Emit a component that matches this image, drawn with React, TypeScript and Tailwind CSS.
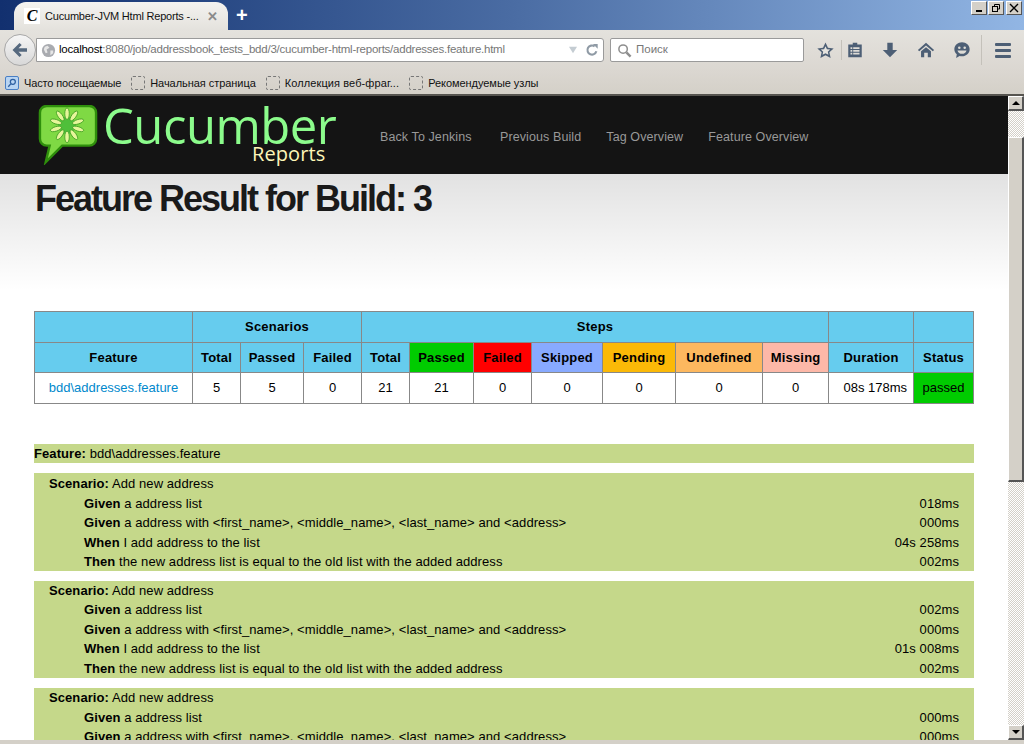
import { Fragment } from 'react';

const font = "font-['Liberation_Sans',Arial,sans-serif]";

const scenarios = [
  { steps: ['018ms', '000ms', '04s 258ms', '002ms'] },
  { steps: ['002ms', '000ms', '01s 008ms', '002ms'] },
  { steps: ['000ms', '000ms', '00s 000ms', '000ms'] },
];

const stepTexts: [string, string][] = [
  ['Given', 'a address list'],
  ['Given', 'a address with <first_name>, <middle_name>, <last_name> and <address>'],
  ['When', 'I add address to the list'],
  ['Then', 'the new address list is equal to the old list with the added address'],
];

const headers: [string, string][] = [
  ['Feature', 'bg-[#66ccee]'],
  ['Total', 'bg-[#66ccee]'],
  ['Passed', 'bg-[#66ccee]'],
  ['Failed', 'bg-[#66ccee]'],
  ['Total', 'bg-[#66ccee]'],
  ['Passed', 'bg-[#00cc00]'],
  ['Failed', 'bg-[#ff0000]'],
  ['Skipped', 'bg-[#88aaff]'],
  ['Pending', 'bg-[#fbb907]'],
  ['Undefined', 'bg-[#fdb85f]'],
  ['Missing', 'bg-[#fdb8a8]'],
  ['Duration', 'bg-[#66ccee]'],
  ['Status', 'bg-[#66ccee]'],
];

const colWidths = ['w-[158px]', 'w-[48px]', 'w-[63px]', 'w-[58px]', 'w-[48px]', 'w-[64px]', 'w-[58px]', 'w-[71px]', 'w-[73px]', 'w-[87px]', 'w-[66px]', 'w-[85px]', 'w-[60px]'];
const values = ['5', '5', '0', '21', '21', '0', '0', '0', '0', '0'];

function ToolIcon({ children, className }: { children: React.ReactNode; className: string }) {
  return (
    <svg viewBox="0 0 20 20" className={className} fill="#4d5f75">
      {children}
    </svg>
  );
}

function Titlebar() {
  return (
    <div className="flex h-[30px] shrink-0 items-end bg-gradient-to-r from-[#12306f] via-[#4a6ca3] to-[#92b6e4] pl-[14px]">
      {/* Tab */}
      <div className="flex h-[28px] w-[214px] items-center rounded-t-[12px] bg-gradient-to-b from-[#f4f3f0] to-[#e4e2dd] pl-[10px]">
        <span className="flex h-[16px] w-[16px] shrink-0 items-center justify-center bg-white font-['Liberation_Serif',serif] text-[16px] font-bold italic leading-none text-black">
          C
        </span>
        <span className="ml-[5px] whitespace-nowrap text-[11px] tracking-[-0.2px] text-[#111]">Cucumber-JVM Html Reports -...</span>
        <span className="ml-[8px] text-[13px] font-bold leading-none text-[#8a8a8a]">✕</span>
      </div>
      <span className="ml-[8px] mb-[5px] text-[20px] font-bold leading-none text-white">+</span>
      {/* Window buttons */}
      <div className="mb-[15px] ml-auto mr-[2px] flex gap-[1px]">
        <span className="flex h-[14px] w-[16px] items-end justify-center border border-[#555] border-t-white border-l-white bg-[#d4d0c8] pb-[2px]">
          <span className="h-[2px] w-[6px] bg-black" />
        </span>
        <span className="flex h-[14px] w-[16px] items-center justify-center border border-[#555] border-t-white border-l-white bg-[#d4d0c8]">
          <svg viewBox="0 0 10 10" className="h-[10px] w-[10px]" fill="none" stroke="#000">
            <path d="M3.5 3V1.5h5v4.5H7" strokeWidth="1" />
            <rect x="1.5" y="3.5" width="5" height="5" strokeWidth="1" />
          </svg>
        </span>
        <span className="ml-[1px] flex h-[14px] w-[16px] items-center justify-center border border-[#555] border-t-white border-l-white bg-[#d4d0c8]">
          <svg viewBox="0 0 10 10" className="h-[10px] w-[10px]" stroke="#000" strokeWidth="1.4">
            <path d="M1 1l8 8M9 1l-8 8" />
          </svg>
        </span>
      </div>
    </div>
  );
}

function Navbar() {
  return (
    <div className="relative flex h-[40px] shrink-0 items-center bg-gradient-to-b from-[#e4e2dd] to-[#dbd7d1] pl-[36px] pr-[8px]">
      {/* Back button */}
      <div className="absolute left-[4px] top-[4px] z-10 flex h-[32px] w-[32px] items-center justify-center rounded-full border border-[#a8a8a8] bg-gradient-to-b from-[#f6f6f6] to-[#d8d8d8]">
        <svg viewBox="0 0 20 20" className="h-[20px] w-[20px]" fill="#56697f">
          <path d="M9.5 3l2.2 2.1-3.2 3.2H17v3.4H8.5l3.2 3.2L9.500 17 2.500 10z" />
        </svg>
      </div>
      {/* URL */}
      <div className="flex h-[24px] w-[568px] items-center rounded-r-[3px] border border-[#9a9a9a] bg-white pl-[4px] pr-[4px]">
        <svg viewBox="0 0 16 16" className="h-[15px] w-[15px]">
          <circle cx="8" cy="8" r="7" fill="#a9abb0" />
          <path d="M4 4l3-1 2 2-3 2 1 3-2 1-2-4zM10 8l3 0 0 3-3 2z" fill="#e7e7e7" />
        </svg>
        <span className="ml-[3px] whitespace-nowrap text-[11.5px] tracking-[-0.24px] text-[#777]">
          <span className="text-black">localhost</span>:8080/job/addressbook_tests_bdd/3/cucumber-html-reports/addresses.feature.html
        </span>
        <svg viewBox="0 0 12 10" className="ml-auto h-[8px] w-[12px]" fill="#c4ccd2">
          <path d="M1 1h10L6 9z" />
        </svg>
        <svg viewBox="0 0 16 16" className="ml-[6px] h-[14px] w-[14px]" fill="none" stroke="#8f9aa5" strokeWidth="2.4">
          <path d="M13 9.5A5.2 5.2 0 1 1 11 3.8" />
          <path d="M9 1h5.5v5.5z" fill="#8f9aa5" stroke="none" />
        </svg>
      </div>
      {/* Search */}
      <div className="ml-[6px] flex h-[24px] w-[194px] items-center rounded-[2px] border border-[#9a9a9a] bg-white pl-[6px]">
        <svg viewBox="0 0 16 16" className="h-[15px] w-[15px]" fill="none" stroke="#8e8e8e">
          <circle cx="6.5" cy="6.5" r="4.5" strokeWidth="1.6" />
          <path d="M10 10l4.5 4.5" strokeWidth="2.6" />
        </svg>
        <span className="ml-[4px] text-[11.5px] text-[#777]">Поиск</span>
      </div>
      {/* Toolbar icons */}
      <div className="relative ml-[12px] flex h-[30px] flex-1 items-center">
        <ToolIcon className="h-[19px] w-[19px]">
          <path d="M10 1.5l2.6 5.6 6 .7-4.5 4.1 1.3 6-5.4-3-5.4 3 1.3-6L1.400 7.800l6-.7z" />
          <path d="M10 5.500l1.500 3.100 3.400.4-2.500 2.300.7 3.300-3.100-1.700-3.100 1.700.7-3.300L5.100 9l3.400-.4z" fill="#e6e4df" />
        </ToolIcon>
        <span className="ml-[6px] h-[20px] w-px bg-[#c4c1ba]" />
        <ToolIcon className="ml-[4px] h-[18px] w-[18px]">
          <path d="M2.500 4h5V2h5v2h5v14h-15z" />
          <path d="M5 7h2v2H5zM8 7h7v2H8zM5 10h2v2H5zM8 10h7v2H8zM5 13h2v2H5zM8 13h7v2H8z" fill="#dedcd6" />
        </ToolIcon>
        <ToolIcon className="ml-[17px] h-[18px] w-[18px]">
          <path d="M7 2h6v8h5l-8 8-8-8h5z" />
        </ToolIcon>
        <ToolIcon className="ml-[18px] h-[18px] w-[18px]">
          <path d="M10 2l9 8-1.500 1.500L10 5 2.500 11.500 1 10z" />
          <path d="M4.500 11.500L10 7l5.500 4.500V18h-3.500v-5H8v5H4.500z" />
        </ToolIcon>
        <ToolIcon className="ml-[18px] h-[18px] w-[18px]">
          <path d="M10 1.500c4.700 0 8.500 3.400 8.500 7.700S14.700 17 10 17c-1 0-1.900-.1-2.700-.4L3.500 19l.7-4.200C2.500 13.400 1.500 11.400 1.500 9.200 1.500 4.900 5.300 1.500 10 1.500z" />
          <circle cx="7" cy="7.500" r="1.400" fill="#dedcd6" />
          <circle cx="13" cy="7.500" r="1.400" fill="#dedcd6" />
          <path d="M5 10.500h10c-.6 2.500-2.500 3.800-5 3.800s-4.400-1.300-5-3.800z" fill="#dedcd6" />
        </ToolIcon>
        <span className="ml-[10px] h-[30px] w-px bg-[#c4c1ba]" />
        <span className="ml-[13px] flex flex-col gap-[3px]">
          <span className="h-[3px] w-[16px] rounded-[1px] bg-[#4d5f75]" />
          <span className="h-[3px] w-[16px] rounded-[1px] bg-[#4d5f75]" />
          <span className="h-[3px] w-[16px] rounded-[1px] bg-[#4d5f75]" />
        </span>
      </div>
    </div>
  );
}

function Bookmark({ label, className }: { label: string; className?: string }) {
  return (
    <div className="flex items-center gap-[5px]">
      <span className="h-[14px] w-[14px] rounded-[2px] border border-dashed border-[#777]" />
      <span className={className}>{label}</span>
    </div>
  );
}

function Bookmarks() {
  return (
    <div className="flex h-[26px] shrink-0 items-center gap-[10px] border-b-2 border-[#56544f] bg-gradient-to-b from-[#dbd7d1] to-[#d4d0c8] pl-[5px] pt-[2px] text-[11px] text-[#111]">
      <div className="flex items-center gap-[5px]">
        <span className="flex h-[14px] w-[14px] items-center justify-center rounded-[2px] border border-[#4a7fc4] bg-[#b8d4f2]">
          <svg viewBox="0 0 12 12" className="h-[10px] w-[10px]" fill="none" stroke="#2d5fa0" strokeWidth="1.500">
            <circle cx="7" cy="4.500" r="3" />
            <path d="M4.500 7L1.500 10.500" />
          </svg>
        </span>
        <span className="tracking-[-0.15px]">Часто посещаемые</span>
      </div>
      <Bookmark label="Начальная страница" className="tracking-[-0.05px]" />
      <Bookmark label="Коллекция веб-фраг..." className="tracking-[0.1px]" />
      <Bookmark label="Рекомендуемые узлы" className="tracking-[-0.05px]" />
    </div>
  );
}

function Logo() {
  return (
    <div className="relative ml-[38px] h-[78px] w-[300px] shrink-0">
      <svg viewBox="0 0 60 62" className="absolute left-0 top-[9px] h-[60px] w-[60px]">
        <path
          d="M8 1h44c4 0 7 3 7 7v27c0 4-3 7-7 7H24L7 59l4-17H8c-4 0-7-3-7-7V8c0-4 3-7 7-7z"
          fill="#7fd944"
          stroke="#2f8f0c"
          strokeWidth="2.500"
        />
        <circle cx="29" cy="21" r="9" fill="#4fbf3a" />
        {[0, 36, 72, 108, 144, 180, 216, 252, 288, 324].map((a) => (
          <ellipse
            key={a}
            cx="29"
            cy="9"
            rx="2.300"
            ry="6"
            fill="#e6f59a"
            stroke="#3c9a20"
            strokeWidth="0.800"
            transform={`rotate(${a} 29 21)`}
          />
        ))}
      </svg>
      <span className="absolute left-[65px] top-[10px] font-['Open_Sans',sans-serif] text-[49px] leading-[38px] tracking-[-0.5px] text-[#8cfc8c]">
        Cucumber
      </span>
      <span className="absolute left-[214px] top-[48px] font-['Open_Sans',sans-serif] text-[20px] leading-[20px] tracking-[0.1px] text-[#fdf6b8]">
        Reports
      </span>
    </div>
  );
}

function ReportTable() {
  return (
    <table className="w-[940px] table-fixed border-collapse text-[13px] text-black">
      <colgroup>
        {colWidths.map((w, i) => (
          <col key={i} className={w} />
        ))}
      </colgroup>
      <thead>
        <tr className="h-[31px] bg-[#66ccee] font-bold tracking-[0.2px]">
          <th className="border border-[#888]" />
          <th colSpan={3} className="border border-[#888]">Scenarios</th>
          <th colSpan={7} className="border border-[#888]">Steps</th>
          <th className="border border-[#888]" />
          <th className="border border-[#888]" />
        </tr>
        <tr className="h-[30px]">
          {headers.map(([label, bg], i) => (
            <th key={i} className={`border border-[#888] font-bold tracking-[0.2px] ${bg}`}>
              {label}
            </th>
          ))}
        </tr>
      </thead>
      <tbody>
        <tr className="h-[31px] bg-white text-center">
          <td className="border border-[#888] text-[#0088cc]">bdd\addresses.feature</td>
          {values.map((v, i) => (
            <td key={i} className="border border-[#888]">{v}</td>
          ))}
          <td className="whitespace-nowrap border border-[#888] pr-[6px] text-right">08s 178ms</td>
          <td className="border border-[#888] bg-[#00cc00]">passed</td>
        </tr>
      </tbody>
    </table>
  );
}

function FeatureDetails() {
  return (
    <div className="mt-[40px] w-[940px] text-[13px] leading-[19.5px] tracking-[0.08px] text-black">
      <div className="h-[19px] bg-[#c5d88a]">
        <b>Feature:</b> bdd\addresses.feature
      </div>
      {scenarios.map((s, i) => (
        <div key={i} className={`mt-[10px] h-[97.5px] bg-[#c5d88a] pr-[15px] ${i === 0 ? 'pt-px' : ''}`}>
          <div className="pl-[15px]">
            <b>Scenario:</b> Add new address
          </div>
          {stepTexts.map(([kw, text], j) => (
            <Fragment key={j}>
              <div className="flex justify-between pl-[50px]">
                <span>
                  <b>{kw}</b> {text}
                </span>
                <span>{s.steps[j]}</span>
              </div>
            </Fragment>
          ))}
        </div>
      ))}
    </div>
  );
}

function Scrollbar() {
  return (
    <div className="flex w-[16px] shrink-0 flex-col bg-[repeating-conic-gradient(#d4d0c8_0_25%,#ffffff_0_50%)] bg-[length:2px_2px]">
      <div className="flex h-[15px] items-center justify-center border border-b-2 border-r-2 border-[#555] border-t-white border-l-white bg-[#d4d0c8]">
        <span className="h-0 w-0 border-x-[4px] border-b-[4px] border-x-transparent border-b-black" />
      </div>
      <div className="mt-[26px] h-[345px] border border-b-2 border-r-2 border-[#555] border-t-white border-l-white bg-[#d4d0c8]" />
      <div className="mt-auto flex h-[15px] items-center justify-center border border-b-2 border-r-2 border-[#555] border-t-white border-l-white bg-[#d4d0c8]">
        <span className="h-0 w-0 border-x-[4px] border-t-[4px] border-x-transparent border-t-black" />
      </div>
    </div>
  );
}

export default function App() {
  return (
    <div className={`flex h-[744px] w-[1024px] flex-col overflow-hidden bg-[#d4d0c8] ${font}`}>
      <Titlebar />
      <Navbar />
      <Bookmarks />
      <div className="flex h-[644px] shrink-0">
        <main className="min-w-0 flex-1 overflow-hidden bg-white">
          <header className="flex h-[78px] items-center bg-[#141414]">
            <Logo />
            <nav className="ml-[42px] flex gap-[25px] pt-[4px] text-[12.5px] tracking-[0.1px] text-[#999]">
              <span className="w-[95px]">Back To Jenkins</span>
              <span>Previous Build</span>
              <span>Tag Overview</span>
              <span>Feature Overview</span>
            </nav>
          </header>
          <div className="h-[137px] bg-gradient-to-b from-[#e2e2e2] to-white to-[85%] pl-[35px] pt-[5px]">
            <h1 className="text-[36px] font-bold leading-[40px] tracking-[-2px] text-[#1a1a1a]">
              Feature Result for Build: 3
            </h1>
          </div>
          <div className="pl-[34px]">
            <ReportTable />
            <FeatureDetails />
          </div>
        </main>
        <Scrollbar />
      </div>
      <div className="h-[4px] shrink-0 bg-[#d4d0c8]" />
    </div>
  );
}
